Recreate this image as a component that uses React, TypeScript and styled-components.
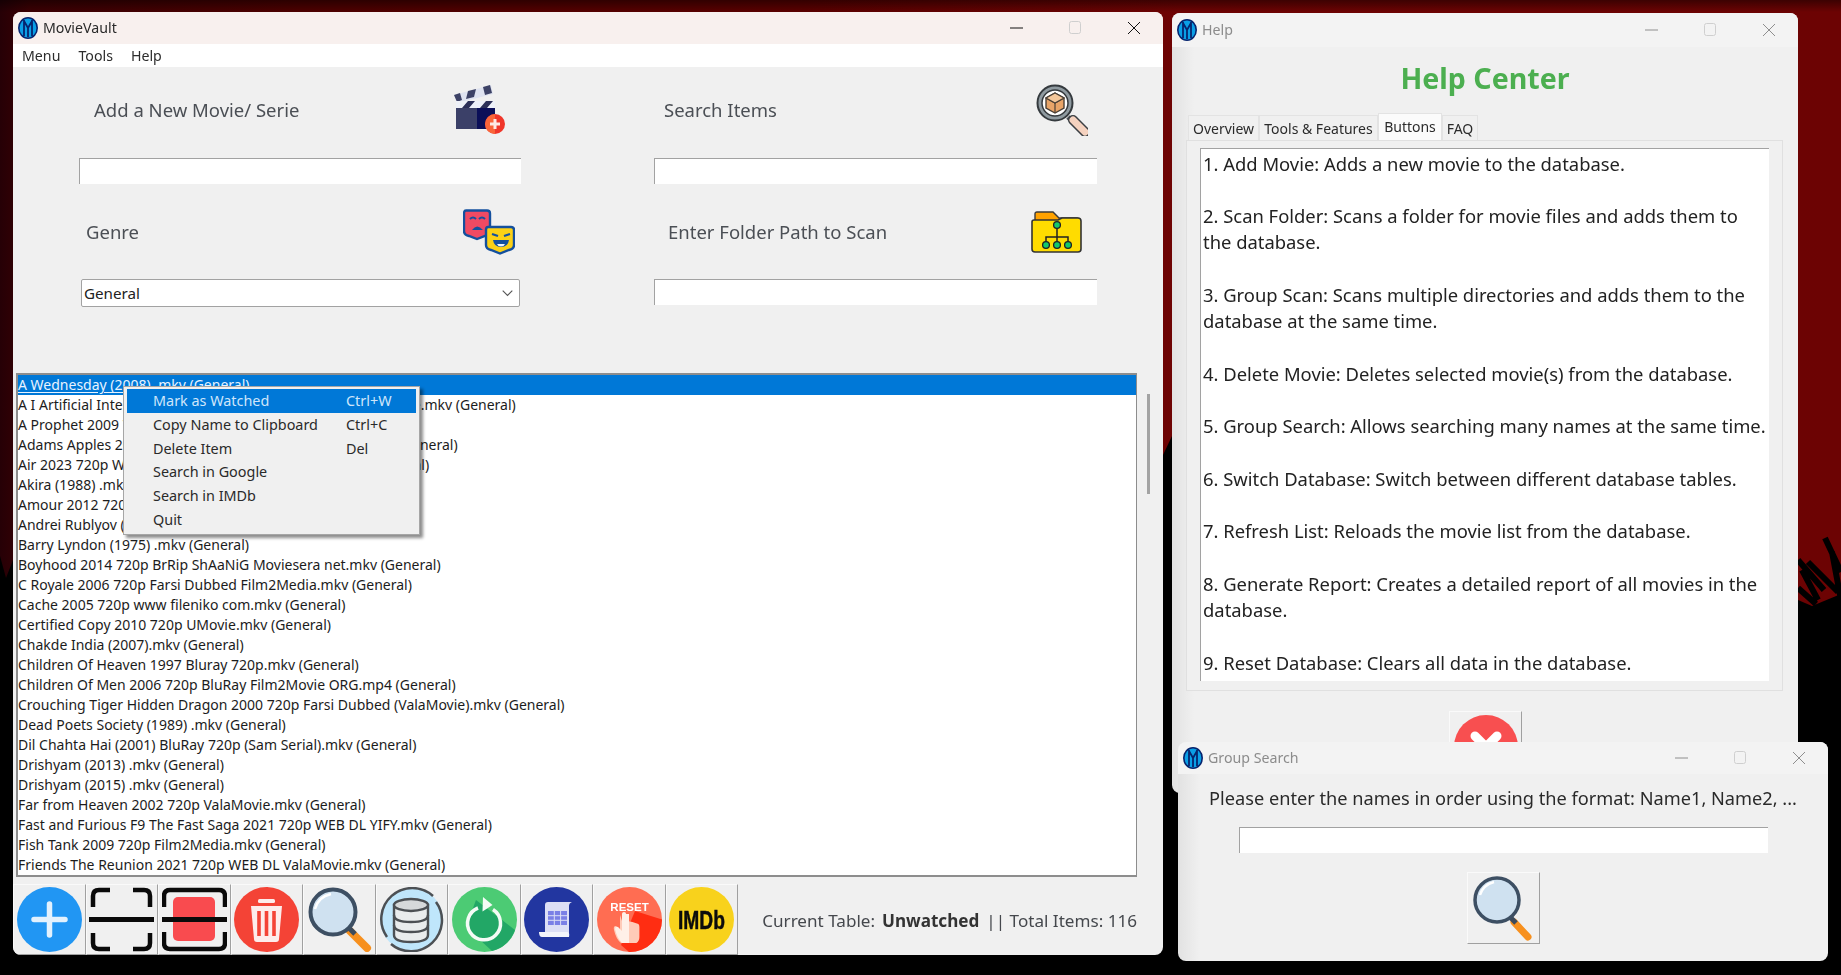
import React from "react";
import styled, { createGlobalStyle } from "styled-components";

const Global = createGlobalStyle`
  html, body { margin: 0; padding: 0; height: 100%; overflow: hidden; background: #000; }
  * { box-sizing: border-box; }
  #root { height: 100%; }
`;

const UI = `"Noto Sans", "Open Sans", "Liberation Sans", sans-serif`;

const Desktop = styled.div`
  position: relative;
  width: 1841px;
  height: 975px;
  overflow: hidden;
  font-family: ${UI};
  background:
    linear-gradient(to bottom, rgba(0,0,0,.45) 0, rgba(0,0,0,0) 12px),
    linear-gradient(to right, #260006 0, #3c0003 30px, #4e0000 300px, #5c0000 800px, #6e0303 1180px, #6c0303 1841px);
`;

const Scenery = styled.svg`
  position: absolute;
  inset: 0;
`;

const Win = styled.section<{ $x: number; $y: number; $w: number; $h: number; $inactive?: boolean }>`
  position: absolute;
  left: ${p => p.$x}px;
  top: ${p => p.$y}px;
  width: ${p => p.$w}px;
  height: ${p => p.$h}px;
  display: flex;
  flex-direction: column;
  border-radius: 8px;
  overflow: hidden;
  filter: blur(.3px);
  background: ${p => p.$inactive
    ? "linear-gradient(to right, #e2e2e2 0, #f0f0f0 22px)"
    : "#f0f0f0"};
`;

const TitleBar = styled.header<{ $h: number; $inactive?: boolean }>`
  flex: none;
  height: ${p => p.$h}px;
  display: flex;
  align-items: center;
  padding-left: 5px;
  background: ${p => p.$inactive ? "#f3f3f3" : "#f8f0ee"};
  color: ${p => p.$inactive ? "#8c8c8c" : "#2a2a2a"};
  font-size: 14.2px;
`;

const TitleText = styled.span`
  flex: 1;
  margin-left: 5px;
  padding-bottom: 2px;
  white-space: nowrap;
`;

const WinControl = styled.span`
  flex: none;
  width: 58.5px;
  height: 100%;
  display: flex;
  align-items: center;
  justify-content: center;
`;

const AppLogo = () => (
  <svg width="20" height="22" viewBox="0 0 20 22" style={{ flex: "none" }}>
    <ellipse cx="10" cy="11" rx="9.2" ry="10.2" fill="#0a9fe6" stroke="#06246e" strokeWidth="1.6" />
    <path d="M6 3v16M14 3v16M6 4l4 7 4-7M10 11v9" fill="none" stroke="#06246e" strokeWidth="1.8" />
  </svg>
);

const WinControls = ({ inactive }: { inactive?: boolean }) => {
  const c = inactive ? "#8e8e8e" : "#111";
  return (
    <>
      <WinControl>
        <svg width="14" height="2" viewBox="0 0 14 2"><path d="M0 1h13" stroke={c} strokeWidth="1" /></svg>
      </WinControl>
      <WinControl>
        <svg width="13" height="14" viewBox="0 0 13 14"><rect x=".5" y=".5" width="11" height="12" rx="2" fill="none" stroke="#cfcfcf" /></svg>
      </WinControl>
      <WinControl>
        <svg width="14" height="14" viewBox="0 0 14 14"><path d="M1 1l12 12M13 1L1 13" stroke={c} strokeWidth="1" /></svg>
      </WinControl>
    </>
  );
};

const MenuBar = styled.nav`
  flex: none;
  height: 23px;
  background: #fff;
  display: flex;
  align-items: center;
  padding-left: 9px;
  gap: 18px;
  font-size: 14.2px;
  color: #2c2c2c;
`;

const FormGrid = styled.div`
  flex: none;
  display: grid;
  grid-template-columns: 442px 443px;
  column-gap: 133px;
  row-gap: 23px;
  padding: 18px 0 0 66px;
`;

const Field = styled.div`
  display: flex;
  flex-direction: column;
`;

const FieldHead = styled.div<{ $indent: number; $inset: number; $gap: number }>`
  height: 49px;
  margin-bottom: ${p => p.$gap}px;
  display: flex;
  align-items: center;
  justify-content: space-between;
  padding: 0 ${p => p.$inset}px 0 ${p => p.$indent}px;
`;

const FieldLabel = styled.span`
  font-size: 18.5px;
  color: #4b4f55;
  white-space: nowrap;
`;

const TextInput = styled.div`
  height: 26px;
  background: #fff;
  border-top: 1.5px solid #a2a2a2;
  border-left: 1.5px solid #a2a2a2;
`;

const Combo = styled.div`
  height: 28px;
  width: 439px;
  margin-left: 2px;
  background: #fff;
  border: 1.5px solid #a2a2a2;
  border-radius: 2px;
  display: flex;
  align-items: center;
  justify-content: space-between;
  padding: 0 6px 0 2px;
  font-size: 15.2px;
  color: #222;
`;

const ListBox = styled.div`
  flex: none;
  position: relative;
  height: 504px;
  width: 1121px;
  margin: 66px 0 0 3px;
  background: #fff;
  border: 2px solid #8d8d8d;
  border-right-width: 1px;
  border-bottom-width: 2px;
`;

const Row = styled.div<{ $selected?: boolean }>`
  height: 20px;
  line-height: 19px;
  font-size: 14px;
  white-space: nowrap;
  color: ${p => p.$selected ? "#e8f3ff" : "#1c1c1c"};
  background: ${p => p.$selected ? "#0078d7" : "transparent"};
  text-decoration: ${p => p.$selected ? "underline" : "none"};
  text-underline-offset: 2px;
`;

const ScrollThumb = styled.div`
  position: absolute;
  left: 1129px;
  top: 19px;
  width: 3px;
  height: 100px;
  background: #a3a3a3;
`;

const ContextMenu = styled.div`
  position: absolute;
  left: 105px;
  top: 11px;
  width: 297px;
  height: 149px;
  padding: 2px 3px;
  background: #f0f0f0;
  border: 1.5px solid #a6a6a6;
  box-shadow: 3px 3px 3px rgba(0,0,0,.45);
  font-size: 14.4px;
  color: #2a2a2a;
`;

const MenuRow = styled.div<{ $active?: boolean }>`
  height: 23.7px;
  display: grid;
  grid-template-columns: 193px 1fr;
  align-items: center;
  padding-left: 26px;
  background: ${p => p.$active ? "#0078d7" : "transparent"};
  color: ${p => p.$active ? "#cfe6fb" : "#2a2a2a"};
  white-space: nowrap;
`;

const Toolbar = styled.div`
  flex: 1;
  display: flex;
  align-items: stretch;
  margin-top: 7px;
  min-height: 0;
`;

const ToolButton = styled.div`
  flex: none;
  width: 72.5px;
  background: #f0f0f0;
  border-top: 1px solid #fafafa;
  border-left: 1px solid #fafafa;
  border-right: 1.5px solid #a0a0a0;
  border-bottom: 1.5px solid #a0a0a0;
  display: flex;
  align-items: center;
  justify-content: center;
  padding-bottom: 1px;
`;

const Status = styled.div`
  flex: 1;
  display: flex;
  align-items: center;
  justify-content: flex-end;
  gap: 7px;
  padding: 2px 26px 0 0;
  font-size: 17.1px;
  color: #45484d;
  white-space: pre;
`;

const StatusValue = styled.b`
  font-weight: 700;
  color: #333;
`;

const HelpHeading = styled.h1`
  flex: none;
  height: 66px;
  margin: 0;
  padding-bottom: 6px;
  display: flex;
  align-items: center;
  justify-content: center;
  font-size: 28.6px;
  font-weight: 700;
  color: #4caf50;
`;

const TabStrip = styled.div`
  flex: none;
  height: 27px;
  display: flex;
  align-items: flex-end;
  padding-left: 16px;
  font-size: 14px;
  color: #2b2b2b;
`;

const Tab = styled.div<{ $w: number; $on?: boolean }>`
  width: ${p => p.$w}px;
  height: ${p => p.$on ? 27 : 25}px;
  display: flex;
  align-items: ${p => p.$on ? "flex-start" : "center"};
  justify-content: center;
  padding-top: ${p => p.$on ? 3 : 0}px;
  white-space: nowrap;
  background: ${p => p.$on ? "#fbfbfb" : "#f0f0f0"};
  border: 1px solid #e3e3e3;
  border-bottom: none;
`;

const TabPane = styled.div`
  flex: none;
  height: 551px;
  margin-left: 14px;
  width: 597px;
  padding: 7px 13px 9px;
  background: #f0f0f0;
  border: 1px solid #e0e0e0;
`;

const HelpText = styled.div`
  height: 100%;
  overflow: hidden;
  padding: 1.5px 0 0 2px;
  background: #fff;
  border-top: 1.5px solid #a2a2a2;
  border-left: 1.5px solid #a2a2a2;
  font-size: 18.4px;
  line-height: 26.27px;
  color: #222;
  white-space: pre;
`;

const HelpAction = styled.div`
  flex: none;
  width: 73px;
  height: 72px;
  margin: 20px 0 0 277px;
  padding-top: 3px;
  display: flex;
  justify-content: center;
  align-items: flex-start;
  background: #f0f0f0;
  border-top: 1px solid #fafafa;
  border-left: 1px solid #fafafa;
  border-right: 1.5px solid #a0a0a0;
  border-bottom: 1.5px solid #a0a0a0;
`;

const GroupBody = styled.div`
  flex: 1;
  display: flex;
  flex-direction: column;
  align-items: center;
`;

const GroupPrompt = styled.p`
  margin: 12px 0 0 0;
  height: 24px;
  line-height: 24px;
  font-size: 18.2px;
  color: #2a2a2a;
  white-space: nowrap;
`;

const GroupInput = styled.div`
  width: 529px;
  height: 26px;
  margin-top: 17px;
  background: #fff;
  border-top: 1.5px solid #a2a2a2;
  border-left: 1.5px solid #a2a2a2;
`;

const GroupButton = styled.div`
  width: 73px;
  height: 72px;
  margin-top: 19px;
  display: flex;
  align-items: center;
  justify-content: center;
  background: #f0f0f0;
  border-top: 1px solid #fafafa;
  border-left: 1px solid #fafafa;
  border-right: 1.5px solid #a0a0a0;
  border-bottom: 1.5px solid #a0a0a0;
`;

/* ---------- drawings ---------- */

const ClapIcon = () => (
  <svg width="52" height="49" viewBox="0 0 52 49">
    <path d="M0 10L37 0l2 9-36 9z" fill="#dfe3f0" />
    <path d="M0 10l6-2 2 7-5 2zM14 6l8-2-2 8-8 2zM29 2l7-2 2 8-7 2z" fill="#3d4266" />
    <path d="M2 16h39v7H2z" fill="#eef1f8" />
    <path d="M8 23l6-7h7l-6 7zM26 23l6-7h7l-6 7z" fill="#2c3058" />
    <path d="M2 23h21v21H2z" fill="#3b4068" />
    <path d="M23 23h18v21H23z" fill="#0b0f58" />
    <circle cx="41" cy="39" r="10" fill="#f0362a" />
    <path d="M41 29a10 10 0 0 0 0 20z" fill="#f9653a" />
    <path d="M41 34v10M36 39h10" stroke="#fde9e4" strokeWidth="3" />
  </svg>
);

const MasksIcon = () => (
  <svg width="52" height="46" viewBox="0 0 52 46">
    <path d="M3 1.5h21q3 0 3 3V22q0 4-5 5l-8 3-8-3q-5-1-5-5V4.5q0-3 2-3z" fill="#f04a63" stroke="#14509e" strokeWidth="2.4" />
    <path d="M7 10q3-3 6 0M16 10q3-3 6 0" stroke="#14509e" strokeWidth="2" fill="none" />
    <path d="M9 21q5-7 11 0z" fill="#14509e" />
    <path d="M25 18h23q3 0 3 3v15q0 4-5 5l-9 3.5-9-3.500q-5-1-5-5V21q0-3 2-3z" fill="#fcd116" stroke="#14509e" strokeWidth="2.4" />
    <path d="M29 25l6 2M47 25l-6 2" stroke="#14509e" strokeWidth="2.2" />
    <path d="M30 31h16q-1 7-8 7t-8-7z" fill="#14509e" />
    <path d="M34 35h8q-1 2.500-4 2.500t-4-2.500z" fill="#eef3fb" />
  </svg>
);

const BoxSearchIcon = () => (
  <svg width="52" height="52" viewBox="0 0 52 52">
    <path d="M32 33l5 5" stroke="#4a5056" strokeWidth="5" />
    <path d="M37 36l12 12" stroke="#3b3f43" strokeWidth="10" strokeLinecap="round" />
    <path d="M37 36l12 12" stroke="#f5d2bf" strokeWidth="7" strokeLinecap="round" />
    <circle cx="19" cy="19" r="17.500" fill="#8f9aa0" stroke="#353a3e" strokeWidth="2" />
    <circle cx="19" cy="19" r="13" fill="#fff" stroke="#353a3e" strokeWidth="1.5" />
    <path d="M19 9l9 5v10l-9 5-9-5V14z" fill="#e8a468" stroke="#4b4036" strokeWidth="1.4" />
    <path d="M10 14l9 5 9-5M19 19v10" fill="none" stroke="#4b4036" strokeWidth="1.2" />
    <path d="M10 14l9-5 9 5-9 5z" fill="#f4c79a" stroke="#4b4036" strokeWidth="1.2" />
  </svg>
);

const FolderIcon = () => (
  <svg width="51" height="42" viewBox="0 0 51 42">
    <path d="M4 9V3q0-2 2-2h16l6 6h18q2 0 2 3v3H4z" fill="#ffa200" stroke="#3a3a3a" strokeWidth="1.4" />
    <path d="M1 11q0-2 2-2h24l4-2h16q3 0 3 3v28q0 3-3 3H4q-3 0-3-3z" fill="#ffdc00" stroke="#333" strokeWidth="1.6" />
    <path d="M26 17v14M15 32v-6h22v6" fill="none" stroke="#222" strokeWidth="1.5" />
    <circle cx="26" cy="14" r="3.400" fill="#13c86b" stroke="#222" strokeWidth="1.3" />
    <circle cx="15" cy="34" r="3.400" fill="#13c86b" stroke="#222" strokeWidth="1.3" />
    <circle cx="26" cy="34" r="3.400" fill="#13c86b" stroke="#222" strokeWidth="1.3" />
    <circle cx="37" cy="34" r="3.400" fill="#13c86b" stroke="#222" strokeWidth="1.3" />
  </svg>
);

const Chevron = () => (
  <svg width="11" height="7" viewBox="0 0 11 7"><path d="M.7.7l4.800 4.800L10.300.7" fill="none" stroke="#555" strokeWidth="1.100" /></svg>
);

const PlusIcon = () => (
  <svg width="65" height="65" viewBox="0 0 65 65">
    <circle cx="32.500" cy="32.500" r="32.500" fill="#2196f3" />
    <path d="M32.500 17v31M17 32.500h31" stroke="#e3f1fd" strokeWidth="5.500" strokeLinecap="round" />
  </svg>
);

const ScanIcon = () => (
  <svg width="65" height="65" viewBox="0 0 65 65" fill="none" stroke="#0a0a0a">
    <path d="M21 3H10q-6 0-6 6v11M44 3h11q6 0 6 6v11M21 62H10q-6 0-6-6V46M44 62h11q6 0 6-6V46" strokeWidth="4.500" />
    <path d="M0 32.500h65" strokeWidth="5" />
  </svg>
);

const ScanFillIcon = () => (
  <svg width="65" height="65" viewBox="0 0 65 65" fill="none" stroke="#0a0a0a">
    <rect x="11" y="10" width="42" height="44" rx="5" fill="#f94b4f" stroke="none" />
    <path d="M2 20V9q0-6 6-6h49q6 0 6 6v11M2 45v11q0 6 6 6h49q6 0 6-6V45" strokeWidth="4.500" />
    <path d="M0 32.500h65" strokeWidth="5" />
  </svg>
);

const TrashIcon = () => (
  <svg width="65" height="65" viewBox="0 0 65 65">
    <circle cx="32.500" cy="32.500" r="32.500" fill="#f44336" />
    <rect x="24" y="12" width="17" height="4" rx="1.500" fill="#fdeceb" />
    <path d="M17 19h31l-3 33q0 3-3 3H23q-3 0-3-3z" fill="#fdeceb" />
    <path d="M25 24v25M32.500 24v25M40 24v25" stroke="#f44336" strokeWidth="3.600" />
  </svg>
);

const LensIcon = () => (
  <svg width="65" height="65" viewBox="0 0 65 65">
    <path d="M43 44l17 17" stroke="#f7901e" strokeWidth="8" strokeLinecap="round" />
    <path d="M42 41l6 6" stroke="#3d4b5c" strokeWidth="5" />
    <circle cx="26" cy="25" r="22.500" fill="#cfe1f0" stroke="#3d4f63" strokeWidth="4" />
    <path d="M8 22q3-12 16-15" fill="none" stroke="#fff" strokeWidth="2.500" />
  </svg>
);

const DatabaseIcon = () => (
  <svg width="65" height="65" viewBox="0 0 65 65">
    <circle cx="32.500" cy="32.500" r="31.500" fill="#bfe6fb" />
    <path d="M8 50A31 31 0 0 1 54 9M57 15A31 31 0 0 1 12 57" fill="none" stroke="#4c5054" strokeWidth="2.500" />
    <path d="M15 18v30q0 7 17 7t17-7V18z" fill="#e9eced" stroke="#4c5054" strokeWidth="2.400" />
    <ellipse cx="32" cy="18" rx="17" ry="6" fill="#d6d9da" stroke="#4c5054" strokeWidth="2.400" />
    <path d="M15 28q0 7 17 7t17-7M15 38q0 7 17 7t17-7" fill="none" stroke="#4c5054" strokeWidth="2.400" />
  </svg>
);

const RefreshIcon = () => (
  <svg width="65" height="65" viewBox="0 0 65 65">
    <circle cx="32.500" cy="32.500" r="32.500" fill="#4ccb74" />
    <path d="M24 13l39 30A32.500 32.500 0 0 1 40 64L14 40z" fill="#22a766" />
    <path d="M26 21a16.500 16.500 0 1 0 15 1.500" fill="none" stroke="#f4fbf6" strokeWidth="3.500" />
    <path d="M31 10l9.500 8-10 6.500z" fill="#f4fbf6" />
  </svg>
);

const ReportIcon = () => (
  <svg width="65" height="65" viewBox="0 0 65 65">
    <circle cx="32.500" cy="32.500" r="32.500" fill="#2236a0" />
    <path d="M21 18q0-3 3-3h24q-3 1-3 4v28q0 3-3 3H21z" fill="#dcdff5" />
    <path d="M15 45h28q3 0 2 5H18q-3 0-3-5z" fill="#f2f4fb" />
    <rect x="24" y="24" width="19" height="14" fill="#7a80e6" />
    <path d="M24 28.700h19M24 33.300h19M30.300 24v14M36.600 24v14" stroke="#dcdff5" strokeWidth="1" />
  </svg>
);

const ResetIcon = () => (
  <svg width="65" height="65" viewBox="0 0 65 65">
    <circle cx="32.500" cy="32.500" r="32.500" fill="#ff6d52" />
    <path d="M38 24l27 8.500A32.500 32.500 0 0 1 32 65L24 58z" fill="#ff2d12" />
    <text x="32.500" y="24" textAnchor="middle" fontFamily="'Liberation Sans', sans-serif" fontWeight="700" fontSize="11.500" fill="#fff">RESET</text>
    <path d="M25 34v-6q0-2 2.200-2t2.200 2v10l1-1v-3l5 1 6 2q1 1 1 3v10q0 4-3 6H24q-5-4-7-13-1-4 2-4l4 4V28" fill="#ffcbb8" />
    <path d="M29 27q0-2-2-2t-2 2v17l-4-4q-3-1-3 2 2 9 7 14h7V27z" fill="#fff0e8" />
  </svg>
);

const ImdbIcon = () => (
  <svg width="65" height="65" viewBox="0 0 65 65">
    <circle cx="32.500" cy="32.500" r="32.500" fill="#f8d21c" />
    <text transform="translate(32.500 42) scale(.74 1)" textAnchor="middle" fontFamily="'Liberation Sans', sans-serif" fontWeight="700" fontSize="26" stroke="#0c0c0c" strokeWidth=".5" fill="#0c0c0c">IMDb</text>
  </svg>
);

const CloseCircle = () => (
  <svg width="64" height="64" viewBox="0 0 64 64">
    <circle cx="32" cy="32" r="32" fill="#f84f50" />
    <path d="M21 21l22 22M43 21L21 43" stroke="#fff" strokeWidth="9" strokeLinecap="round" />
  </svg>
);

const BigLens = () => (
  <svg width="62" height="66" viewBox="0 0 62 66">
    <path d="M42 47l14 15" stroke="#f7901e" strokeWidth="7" strokeLinecap="round" />
    <path d="M38 42l6 6" stroke="#3d4b5c" strokeWidth="5" />
    <circle cx="25" cy="25" r="22" fill="#cfe1f0" stroke="#3d4f63" strokeWidth="3.500" />
    <path d="M8 20q3-10 14-13" fill="none" stroke="#fff" strokeWidth="2.500" />
  </svg>
);

const movies = [
  "A I Artificial Intelligence 2001 720p BluRay Dubbed ValaMovie.mkv (General)",
  "A Prophet 2009 720p BluRay.mkv (General)",
  "Adams Apples 2005 720p Farsi Dubbed (Film2Media).mkv (General)",
  "Air 2023 720p WEB DL Farsi Dubbed Film2Media.mkv (General)",
  "Akira (1988) .mkv (General)",
  "Amour 2012 720p BluRay.mkv (General)",
  "Andrei Rublyov (1966) .mkv (General)",
  "Barry Lyndon (1975) .mkv (General)",
  "Boyhood 2014 720p BrRip ShAaNiG Moviesera net.mkv (General)",
  "C Royale 2006 720p Farsi Dubbed Film2Media.mkv (General)",
  "Cache 2005 720p www fileniko com.mkv (General)",
  "Certified Copy 2010 720p UMovie.mkv (General)",
  "Chakde India (2007).mkv (General)",
  "Children Of Heaven 1997 Bluray 720p.mkv (General)",
  "Children Of Men 2006 720p BluRay Film2Movie ORG.mp4 (General)",
  "Crouching Tiger Hidden Dragon 2000 720p Farsi Dubbed (ValaMovie).mkv (General)",
  "Dead Poets Society (1989) .mkv (General)",
  "Dil Chahta Hai (2001) BluRay 720p (Sam Serial).mkv (General)",
  "Drishyam (2013) .mkv (General)",
  "Drishyam (2015) .mkv (General)",
  "Far from Heaven 2002 720p ValaMovie.mkv (General)",
  "Fast and Furious F9 The Fast Saga 2021 720p WEB DL YIFY.mkv (General)",
  "Fish Tank 2009 720p Film2Media.mkv (General)",
  "Friends The Reunion 2021 720p WEB DL ValaMovie.mkv (General)",
];

const menuItems: [string, string][] = [
  ["Mark as Watched", "Ctrl+W"],
  ["Copy Name to Clipboard", "Ctrl+C"],
  ["Delete Item", "Del"],
  ["Search in Google", ""],
  ["Search in IMDb", ""],
  ["Quit", ""],
];

const helpLines = `1. Add Movie: Adds a new movie to the database.

2. Scan Folder: Scans a folder for movie files and adds them to
the database.

3. Group Scan: Scans multiple directories and adds them to the
database at the same time.

4. Delete Movie: Deletes selected movie(s) from the database.

5. Group Search: Allows searching many names at the same time.

6. Switch Database: Switch between different database tables.

7. Refresh List: Reloads the movie list from the database.

8. Generate Report: Creates a detailed report of all movies in the
database.

9. Reset Database: Clears all data in the database.`;

const toolIcons = [PlusIcon, ScanIcon, ScanFillIcon, TrashIcon, LensIcon, DatabaseIcon, RefreshIcon, ReportIcon, ResetIcon, ImdbIcon];

export default function App() {
  return (
    <Desktop>
      <Global />
      <Scenery width="1841" height="975" viewBox="0 0 1841 975">
        <path d="M0 556L6 578L13 560L13 600L1100 600L1163 455L1172 436L1180 500L1798 600L1812 606L1841 594L1841 975L0 975Z" fill="#000" />
        <path d="M1798 560L1824 590M1802 570L1818 600M1808 562L1838 592M1825 538L1841 572M1832 552L1841 600M1798 588L1816 604" stroke="#000" strokeWidth="6" fill="none" />
      </Scenery>

      <Win $x={13} $y={12} $w={1150} $h={943}>
        <TitleBar $h={32}>
          <AppLogo />
          <TitleText>MovieVault</TitleText>
          <WinControls />
        </TitleBar>
        <MenuBar>
          <span>Menu</span>
          <span>Tools</span>
          <span>Help</span>
        </MenuBar>
        <FormGrid>
          <Field>
            <FieldHead $indent={15} $inset={15} $gap={24}>
              <FieldLabel>Add a New Movie/ Serie</FieldLabel>
              <ClapIcon />
            </FieldHead>
            <TextInput />
          </Field>
          <Field>
            <FieldHead $indent={10} $inset={9} $gap={24}>
              <FieldLabel>Search Items</FieldLabel>
              <BoxSearchIcon />
            </FieldHead>
            <TextInput />
          </Field>
          <Field>
            <FieldHead $indent={7} $inset={6} $gap={23}>
              <FieldLabel>Genre</FieldLabel>
              <MasksIcon />
            </FieldHead>
            <Combo>
              <span>General</span>
              <Chevron />
            </Combo>
          </Field>
          <Field>
            <FieldHead $indent={14} $inset={15} $gap={23}>
              <FieldLabel>Enter Folder Path to Scan</FieldLabel>
              <FolderIcon />
            </FieldHead>
            <TextInput />
          </Field>
        </FormGrid>
        <ListBox>
          <Row $selected>A Wednesday (2008) .mkv (General)</Row>
          {movies.map(m => <Row key={m}>{m}</Row>)}
          <ContextMenu>
            {menuItems.map(([label, keys], i) => (
              <MenuRow key={label} $active={i === 0}>
                <span>{label}</span>
                <span>{keys}</span>
              </MenuRow>
            ))}
          </ContextMenu>
          <ScrollThumb />
        </ListBox>
        <Toolbar>
          {toolIcons.map((Icon, i) => (
            <ToolButton key={i}><Icon /></ToolButton>
          ))}
          <Status>
            <span>Current Table:</span>
            <StatusValue>Unwatched</StatusValue>
            <span>|| Total Items: 116</span>
          </Status>
        </Toolbar>
      </Win>

      <Win $x={1172} $y={13} $w={626} $h={780} $inactive>
        <TitleBar $h={34} $inactive>
          <AppLogo />
          <TitleText>Help</TitleText>
          <WinControls inactive />
        </TitleBar>
        <HelpHeading>Help Center</HelpHeading>
        <TabStrip>
          <Tab $w={71}>Overview</Tab>
          <Tab $w={119}>Tools &amp; Features</Tab>
          <Tab $w={64} $on>Buttons</Tab>
          <Tab $w={36}>FAQ</Tab>
        </TabStrip>
        <TabPane>
          <HelpText>{helpLines}</HelpText>
        </TabPane>
        <HelpAction><CloseCircle /></HelpAction>
      </Win>

      <Win $x={1178} $y={742} $w={650} $h={219} $inactive>
        <TitleBar $h={32} $inactive>
          <AppLogo />
          <TitleText>Group Search</TitleText>
          <WinControls inactive />
        </TitleBar>
        <GroupBody>
          <GroupPrompt>Please enter the names in order using the format: Name1, Name2, ...</GroupPrompt>
          <GroupInput />
          <GroupButton><BigLens /></GroupButton>
        </GroupBody>
      </Win>
    </Desktop>
  );
}
